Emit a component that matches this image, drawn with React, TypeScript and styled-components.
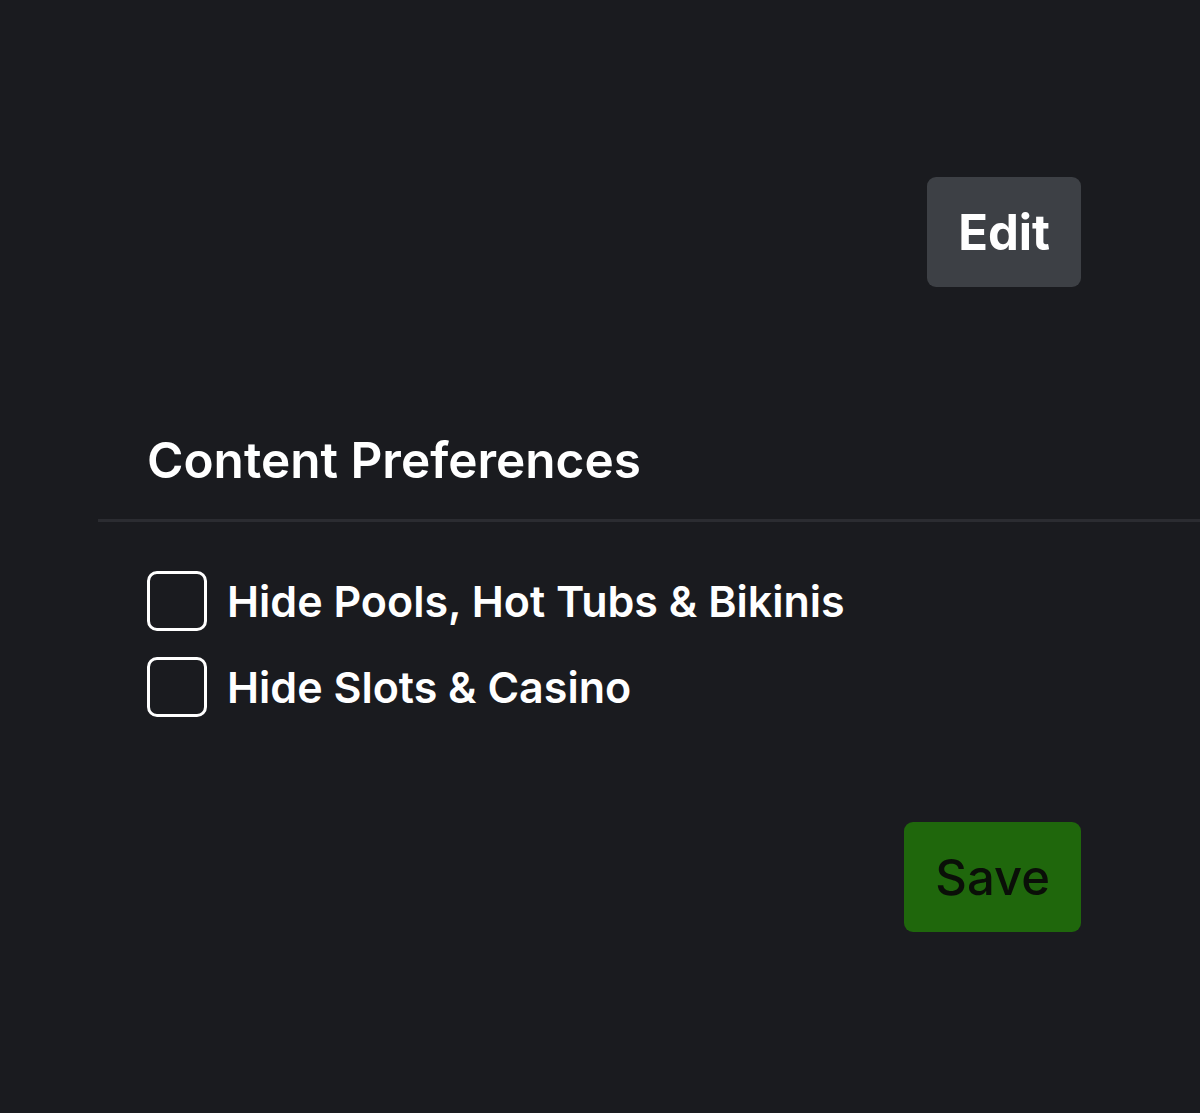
import React from "react";
import styled, { createGlobalStyle } from "styled-components";

const Global = createGlobalStyle`
  html, body { margin: 0; padding: 0; background: #1a1b1f; }
  body { font-family: Inter, "Noto Sans", "Liberation Sans", sans-serif; color: #ffffff; }
`;

const Page = styled.div`
  width: 1200px;
  min-height: 1113px;
  background: #1a1b1f;
  display: flex;
  flex-direction: column;
  padding-top: 177px;
  box-sizing: border-box;
`;

const TopBar = styled.div`
  display: flex;
  justify-content: flex-end;
  padding-right: 119px;
`;

const Button = styled.button<{ $variant: "edit" | "save" }>`
  height: 110px;
  padding: 0 31px;
  border: none;
  border-radius: 9px;
  font-family: Inter, "Noto Sans", sans-serif;
  font-size: 49px;
  font-weight: ${(p) => (p.$variant === "edit" ? 700 : 500)};
  background: ${(p) => (p.$variant === "edit" ? "#3d4045" : "#1f670c")};
  color: ${(p) => (p.$variant === "edit" ? "#ffffff" : "#0a0f08")};
  cursor: pointer;
`;

const Section = styled.section`
  margin-left: 98px;
  margin-top: 138px;
`;

const Heading = styled.h2`
  margin: 0;
  padding: 5px 0 29px 49px;
  font-size: 49.5px;
  font-weight: 600;
  line-height: 60px;
  border-bottom: 3px solid #2b2c31;
`;

const Options = styled.div`
  display: flex;
  flex-direction: column;
  gap: 26px;
  padding: 49px 0 0 49px;
`;

const Option = styled.label`
  display: flex;
  align-items: center;
  gap: 20px;
  font-size: 43px;
  font-weight: 600;
  line-height: 60px;
`;

const Box = styled.span`
  width: 60px;
  height: 60px;
  box-sizing: border-box;
  border: 3px solid #ffffff;
  border-radius: 10px;
  flex-shrink: 0;
`;

const Footer = styled.div`
  display: flex;
  justify-content: flex-end;
  padding-right: 119px;
  margin-top: 105px;
`;

export default function App() {
  return (
    <>
      <Global />
      <Page>
        <TopBar>
          <Button $variant="edit">Edit</Button>
        </TopBar>
        <Section>
          <Heading>Content Preferences</Heading>
          <Options>
            <Option>
              <Box />
              Hide Pools, Hot Tubs &amp; Bikinis
            </Option>
            <Option>
              <Box />
              Hide Slots &amp; Casino
            </Option>
          </Options>
        </Section>
        <Footer>
          <Button $variant="save">Save</Button>
        </Footer>
      </Page>
    </>
  );
}
